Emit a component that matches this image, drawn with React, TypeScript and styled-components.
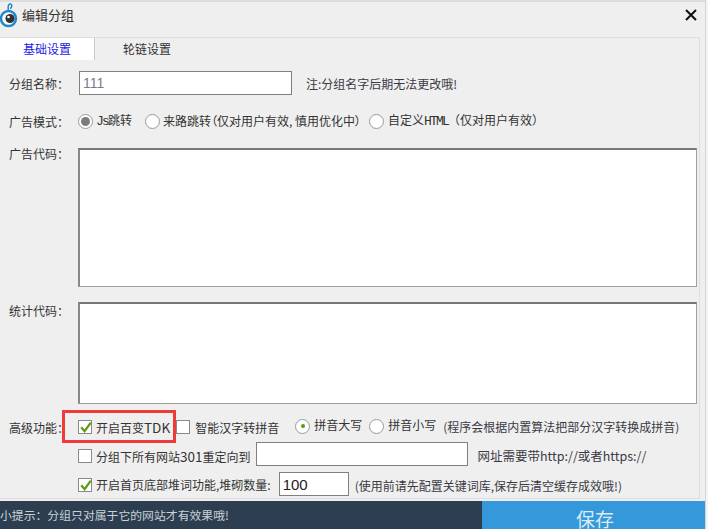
import React from "react";
import styled, { createGlobalStyle } from "styled-components";

const Global = createGlobalStyle`
  html, body { margin: 0; padding: 0; background: #f4f4f4; }
  body { font-family: "Noto Sans CJK SC", "Noto Sans", sans-serif; font-size: 12px; color: #333; overflow: hidden; }
  * { box-sizing: border-box; }
`;

const Win = styled.div`
  width: 706px; height: 529px; background: #efefef;
  border-top: 2px solid #dcdcdc; border-right: 1px solid #d4d4d4;
  display: flex; flex-direction: column; overflow: hidden;
`;
const TitleBar = styled.div`
  height: 35px; display: flex; align-items: center; padding-right: 8px; flex: none;
`;
const Title = styled.span`font-size: 13px; color: #333; margin-left: 3px; margin-top: -10px;`;
const Close = styled.svg`margin-left: auto; margin-top: -10px;`;
const Logo = styled.svg`margin-top: -9px; flex: none;`;

const Panel = styled.div`
  height: 462px; width: 700px; flex: none; border: 1px solid #dedede; border-left: none; display: flex; flex-direction: column;
`;
const Tabs = styled.div`display: flex; height: 22px; flex: none;`;
const Tab = styled.div<{ $active?: boolean }>`
  width: ${p => (p.$active ? "95px" : "104px")};
  background: ${p => (p.$active ? "#fff" : "transparent")};
  color: ${p => (p.$active ? "#2222e0" : "#333")};
  border-right: ${p => (p.$active ? "1px solid #c8c8c8" : "none")};
  display: flex; align-items: center; justify-content: center; font-size: 12px; padding-bottom: 1px;
`;
const Row = styled.div<{ $h: number; $top?: number }>`
  display: flex; align-items: center; height: ${p => p.$h}px; margin-top: ${p => p.$top ?? 0}px; flex: none;
`;
const AreaRow = styled.div<{ $h: number; $top: number }>`
  display: flex; align-items: flex-start; height: ${p => p.$h}px; margin-top: ${p => p.$top}px; flex: none;
`;
const Label = styled.div<{ $shift?: number }>`
  width: 78px; padding-left: 9px; flex: none; font-size: 12px; margin-top: ${p => p.$shift ?? 0}px; color: #333; white-space: nowrap;
`;
const Input = styled.div<{ $w: number; $h?: number; $ml?: number; $color?: string; $size?: number }>`
  width: ${p => p.$w}px; height: ${p => p.$h ?? 24}px; margin-left: ${p => p.$ml ?? 0}px;
  background: #fff; border: 1px solid #7f7f7f; display: flex; align-items: center; padding-left: 3px;
  font-family: "Liberation Sans", sans-serif; font-size: ${p => p.$size ?? 14}px; color: ${p => p.$color ?? "#222"}; flex: none;
`;
const Note = styled.span<{ $ml?: number; $size?: number; $mt?: number }>`
  font-size: ${p => p.$size ?? 12}px; margin-left: ${p => p.$ml ?? 0}px; margin-top: ${p => p.$mt ?? 0}px; color: #3b3a44; white-space: nowrap;
`;
const Text = styled.span<{ $ml?: number; $mt?: number }>`
  font-size: 12px; margin-left: ${p => p.$ml ?? 0}px; margin-top: ${p => p.$mt ?? 0}px; color: #333; white-space: nowrap;
`;
const TightText = styled(Text)`font-feature-settings: "palt";`;
const Mono = styled.span`font-family: "Liberation Mono", monospace; font-size: 13px; letter-spacing: -1.8px;`;
const Big = styled.span`font-size: 13.5px;`;
const Radio = styled.span<{ $state?: "gray" | "green"; $ml?: number; $mt?: number }>`
  width: 15px; height: 15px; border-radius: 50%; border: 1px solid #9a9a9a; background: #fff; flex: none;
  margin-left: ${p => p.$ml ?? 0}px; margin-top: ${p => p.$mt ?? 0}px; display: flex; align-items: center; justify-content: center;
  &::after {
    content: ""; display: ${p => (p.$state ? "block" : "none")};
    width: ${p => (p.$state === "green" ? 4 : 9)}px; height: ${p => (p.$state === "green" ? 4 : 9)}px; border-radius: 50%;
    background: ${p => (p.$state === "green" ? "#5a9a12" : "#7c7c7c")};
  }
`;
const CheckBox = styled.span<{ $ml?: number; $mt?: number }>`
  width: 14px; height: 14px; border: 1px solid #8a8a8a; background: #fff; flex: none; position: relative;
  margin-left: ${p => p.$ml ?? 0}px; margin-top: ${p => p.$mt ?? 0}px;
`;
const Tick = styled.svg`position: absolute; left: 0; top: -1px;`;
const TextArea = styled.div<{ $w: number; $h: number }>`
  width: ${p => p.$w}px; height: ${p => p.$h}px; background: #fff;
  border: 1px solid #a0a0a0; border-top: 2px solid #777; border-left: 2px solid #888; flex: none;
`;
const Highlight = styled.div`
  position: absolute; left: 62px; top: 410px; width: 114px; height: 33px; border: 3px solid #f03a3a; pointer-events: none;
`;
const Footer = styled.div`
  height: 28px; margin-top: 2px; width: 708px; display: flex; flex: none; background: #2c3e50;
`;
const Tip = styled.div`
  width: 482px; color: #c9d1d8; font-size: 11.85px; display: flex; align-items: center; padding-bottom: 2px; white-space: nowrap; flex: none;
`;
const Save = styled.div`
  flex: 1; background: #3498db; color: #dbeaf5; font-size: 19px; text-align: center;
  line-height: 26px; padding-top: 5px; overflow: hidden;
`;

const Check = ({ mt }: { mt?: number }) => (
  <CheckBox $mt={mt}>
    <Tick width="14" height="14" viewBox="0 0 14 14">
      <path d="M2.2 7.2 L5.6 11.2 L11.8 2.6" fill="none" stroke="#5f9a12" strokeWidth="2.2" />
    </Tick>
  </CheckBox>
);

export default function App() {
  return (
    <Win>
      <Global />
      <TitleBar>
        <Logo width="19" height="26" viewBox="0 0 19 26">
          <circle cx="8.5" cy="16.5" r="7.5" fill="#fff" stroke="#1f87c9" strokeWidth="2.4" />
          <circle cx="10" cy="16.5" r="4.6" fill="#2f3338" />
          <circle cx="8.5" cy="15" r="1.3" fill="#fff" />
          <path d="M8.5 9 C7.5 4.5 8.5 1.5 10.5 2 C12.5 2.5 12 6 10 6.5" fill="none" stroke="#1f87c9" strokeWidth="1.5" />
        </Logo>
        <Title>编辑分组</Title>
        <Close width="12" height="12" viewBox="0 0 12 12">
          <path d="M1 1 L11 11 M11 1 L1 11" stroke="#111" strokeWidth="2" />
        </Close>
      </TitleBar>
      <Panel>
        <Tabs>
          <Tab $active>基础设置</Tab>
          <Tab>轮链设置</Tab>
        </Tabs>
        <Row $h={24} $top={11}>
          <Label>分组名称：</Label>
          <Input $w={213} $ml={1} $color="#7d7a8c">111</Input>
          <Note $ml={14}>注:分组名字后期无法更改哦!</Note>
        </Row>
        <Row $h={24} $top={14}>
          <Label>广告模式：</Label>
          <Radio $state="gray" />
          <Text $ml={3} $mt={-2}><Mono>Js</Mono>跳转</Text>
          <Radio $ml={13} />
          <TightText $ml={3} $mt={-2}>来路跳转（仅对用户有效, 慎用优化中）</TightText>
          <Radio $ml={8} />
          <Text $ml={4} $mt={-2}>自定义<Mono>HTML</Mono>（仅对用户有效）</Text>
        </Row>
        <AreaRow $h={139} $top={15}>
          <Label $shift={-3}>广告代码：</Label>
          <TextArea $w={619} $h={139} />
        </AreaRow>
        <AreaRow $h={102} $top={15}>
          <Label>统计代码：</Label>
          <TextArea $w={619} $h={102} />
        </AreaRow>
        <Row $h={24} $top={11}>
          <Label>高级功能：</Label>
          <Check />
          <Text $ml={4}>开启百变<Big>TDK</Big></Text>
          <CheckBox $ml={6} />
          <Text $ml={5}>智能汉字转拼音</Text>
          <Radio $state="green" $ml={16} $mt={-2} />
          <Text $ml={4} $mt={-6}>拼音大写</Text>
          <Radio $ml={7} $mt={-2} />
          <Text $ml={4} $mt={-6}>拼音小写</Text>
          <Note $ml={7} $mt={-2}>(程序会根据内置算法把部分汉字转换成拼音)</Note>
        </Row>
        <Row $h={24} $top={3}>
          <Label />
          <CheckBox $mt={4} />
          <Text $ml={4} $mt={4}>分组下所有网站<Big>301</Big>重定向到</Text>
          <Input $w={212} $ml={5} />
          <Note $ml={10} $size={12.5} $mt={2}>网址需要带http://或者https://</Note>
        </Row>
        <Row $h={24} $top={6}>
          <Label />
          <Check mt={2} />
          <Text $ml={4}>开启首页底部堆词功能,堆砌数量:</Text>
          <Input $w={70} $h={24} $ml={8} $size={15}>100</Input>
          <Note $ml={6} $mt={2}>(使用前请先配置关键词库,保存后清空缓存成效哦!)</Note>
        </Row>
      </Panel>
      <Footer>
        <Tip>小提示：分组只对属于它的网站才有效果哦!</Tip>
        <Save>保存</Save>
      </Footer>
      <Highlight />
    </Win>
  );
}
